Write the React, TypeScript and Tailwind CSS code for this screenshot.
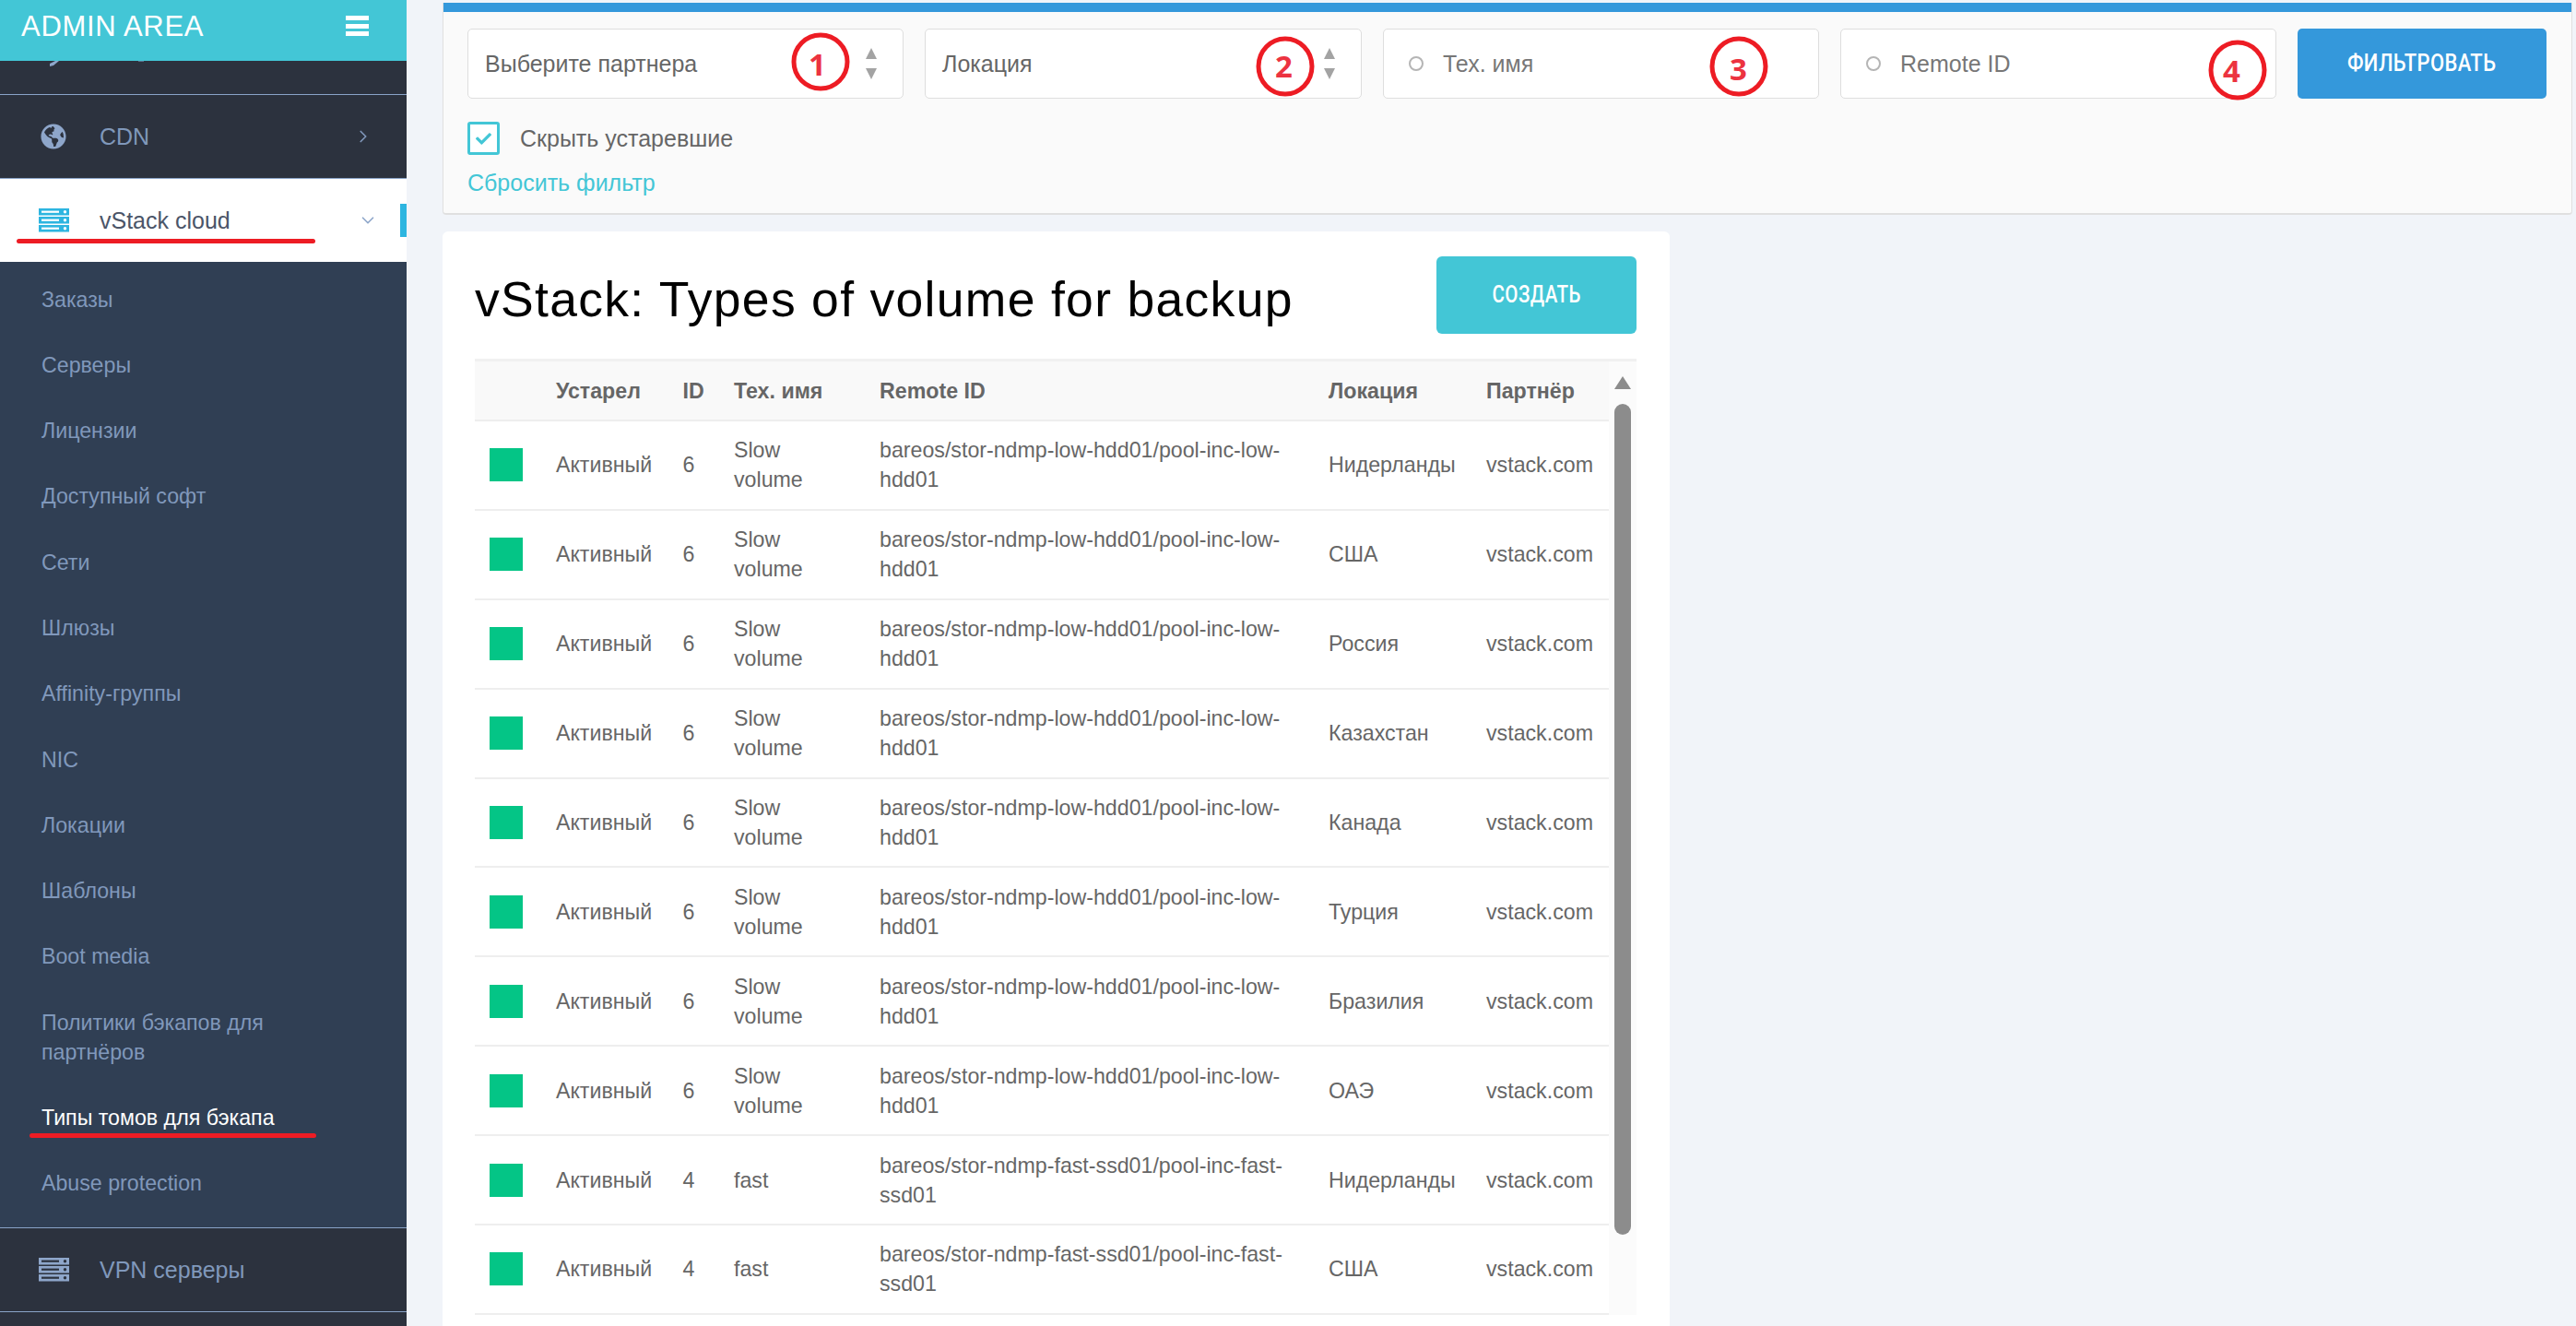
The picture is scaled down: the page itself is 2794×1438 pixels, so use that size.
import React from "react";
import { ChevronRight, ChevronDown } from "lucide-react";
import { FaGlobeAmericas, FaCheck } from "react-icons/fa";

function ServerIcon({ color, inner }: { color: string; inner: string }) {
  return (
    <svg width="33" height="26" viewBox="0 0 33 26" className="shrink-0">
      {[0, 9, 18].map((y) => (
        <g key={y}>
          <rect x="0" y={y} width="33" height="7.5" fill={color} />
          <rect x="3" y={y + 2.6} width="19" height="2.2" fill={inner} />
          <circle cx="28.5" cy={y + 3.7} r="1.7" fill={inner} />
        </g>
      ))}
    </svg>
  );
}

const sub = [
  "Заказы",
  "Серверы",
  "Лицензии",
  "Доступный софт",
  "Сети",
  "Шлюзы",
  "Affinity-группы",
  "NIC",
  "Локации",
  "Шаблоны",
  "Boot media",
  "Политики бэкапов для партнёров",
  "Типы томов для бэкапа",
  "Abuse protection",
];

const low = "bareos/stor-ndmp-low-hdd01/pool-inc-low-hdd01";
const fast = "bareos/stor-ndmp-fast-ssd01/pool-inc-fast-ssd01";
const rows = [
  ["6", "Slow volume", low, "Нидерланды"],
  ["6", "Slow volume", low, "США"],
  ["6", "Slow volume", low, "Россия"],
  ["6", "Slow volume", low, "Казахстан"],
  ["6", "Slow volume", low, "Канада"],
  ["6", "Slow volume", low, "Турция"],
  ["6", "Slow volume", low, "Бразилия"],
  ["6", "Slow volume", low, "ОАЭ"],
  ["4", "fast", fast, "Нидерланды"],
  ["4", "fast", fast, "США"],
];

function SelectBox({ label, className }: { label: string; className: string }) {
  return (
    <div className={`flex h-[76px] items-center justify-between rounded-[5px] border border-[#dedede] bg-white pl-[18px] pr-[28px] ${className}`}>
      <span className="-mt-[1px]">{label}</span>
      <span className="flex flex-col gap-[10px]">
        <span className="h-0 w-0 border-x-[6px] border-b-[12px] border-x-transparent border-b-[#a3a3a3]" />
        <span className="h-0 w-0 border-x-[6px] border-t-[12px] border-x-transparent border-t-[#a3a3a3]" />
      </span>
    </div>
  );
}

function SearchBox({ label }: { label: string }) {
  return (
    <div className="flex h-[76px] w-[473px] items-center rounded-[5px] border border-[#dedede] bg-white pl-[27px] text-[#777]">
      <span className="mr-[21px] h-[16px] w-[16px] rounded-full border-[2.5px] border-[#b5b5b5]" />
      <span className="-mt-[1px]">{label}</span>
    </div>
  );
}

function Mark({ pos, digit, digitPos, ry }: { pos: string; digit: string; digitPos: string; ry: number }) {
  return (
    <>
      <svg width="66" height="68" viewBox="0 0 66 68" className={`absolute ${pos}`}>
        <ellipse cx="33" cy="34" rx="29" ry={ry} fill="none" stroke="#ed1c24" strokeWidth="5" />
      </svg>
      <span className={`absolute text-[33px] font-bold leading-none text-[#ec3340] [font-family:'Open_Sans',sans-serif] ${digitPos}`}>{digit}</span>
    </>
  );
}

export default function App() {
  return (
    <div className="relative flex h-[1438px] w-[2794px] overflow-hidden bg-[#f1f4f9] text-[23.2px] leading-[32px] text-[#666] [font-family:'Liberation_Sans',sans-serif]">
      <aside className="flex h-full w-[441px] shrink-0 flex-col bg-[#2c323e]">
        <div className="flex h-[66px] shrink-0 items-start justify-between bg-[#43c6d6] pl-[23px] pr-[41px] pt-[11px] text-white">
          <span className="text-[31px] leading-[36px] tracking-[0.7px]">ADMIN AREA</span>
          <span className="mt-[6px] flex w-[25px] flex-col gap-[3.5px]">
            <span className="h-[5px] bg-white" />
            <span className="h-[5px] bg-white" />
            <span className="h-[5px] bg-white" />
          </span>
        </div>
        <div className="h-[37px] shrink-0 border-b border-[#8aa4c8]">
          <svg width="160" height="7" viewBox="0 0 160 7" className="block">
            <path d="M54 6 L54 3 L60 0 L64 0 L58 5 Z" fill="#8ea6ca" />
            <rect x="150" y="0" width="6" height="1" fill="#5a6f8a" />
          </svg>
        </div>
        <div className="flex h-[91px] shrink-0 items-center border-b border-[#8aa4c8] pl-[44px] pr-[36px] text-[25px] text-[#8098bb]">
          <FaGlobeAmericas className="h-[28px] w-[28px] text-[#8ea6ca]" />
          <span className="ml-[36px] flex-1">CDN</span>
          <ChevronRight className="h-[22px] w-[22px]" strokeWidth={1.8} />
        </div>
        <div className="relative flex h-[90px] shrink-0 items-center bg-white pl-[42px] pr-[31px] text-[25px] text-[#4b5568]">
          <ServerIcon color="#2db5e0" inner="#ffffff" />
          <span className="ml-[33px] flex-1">vStack cloud</span>
          <ChevronDown className="h-[22px] w-[22px] text-[#8ea6ca]" strokeWidth={1.8} />
          <span className="absolute right-0 top-[27px] h-[36px] w-[7px] bg-[#2db5e0]" />
        </div>
        <ul className="h-[1047px] shrink-0 bg-[#303f54] pl-[45px] pr-[100px] pt-[5px] text-[#8098bb]">
          {sub.map((s) => (
            <li key={s} className={`py-[19.65px] ${s.startsWith("Типы") ? "text-white" : ""}`}>
              {s}
            </li>
          ))}
        </ul>
        <div className="flex h-[92px] shrink-0 items-center border-y border-[#8aa4c8] pl-[42px] text-[25px] text-[#8098bb]">
          <ServerIcon color="#8ea6ca" inner="#2c323e" />
          <span className="ml-[33px]">VPN серверы</span>
        </div>
      </aside>

      <main className="min-w-0 flex-1 pl-[39px] pr-[4px] pt-[3px]">
        <section className="h-[230px] rounded-b-[4px] border-x border-b-2 border-[#e0e0e0] bg-[#fafafa] text-[25px]">
          <div className="h-[10px] bg-[#3498db]" />
          <div className="flex gap-[23px] pl-[26px] pr-[27px] pt-[18px]">
            <SelectBox label="Выберите партнера" className="w-[473px]" />
            <SelectBox label="Локация" className="w-[474px]" />
            <SearchBox label="Тех. имя" />
            <SearchBox label="Remote ID" />
            <button className="h-[76px] w-[270px] rounded-[5px] bg-[#3498db] font-medium tracking-[0.4px] text-white [font-family:Roboto,sans-serif]">
              <span className="inline-block origin-center scale-x-[0.88] text-[25px]">ФИЛЬТРОВАТЬ</span>
            </button>
          </div>
          <div className="flex items-center pl-[26px] pt-[25px]">
            <span className="flex h-[36px] w-[35px] items-center justify-center rounded-[3px] border-[3.5px] border-[#43c6d6] bg-white">
              <FaCheck className="h-[17px] w-[17px] text-[#43c6d6]" />
            </span>
            <span className="ml-[22px]">Скрыть устаревшие</span>
          </div>
          <div className="pl-[26px] pt-[14px] text-[#43c6d6]">Сбросить фильтр</div>
        </section>

        <section className="mt-[18px] h-[1300px] w-[1331px] overflow-hidden rounded-t-[6px] bg-white pl-[35px] pr-[36px] pt-[27px]">
          <div className="flex h-[111px] items-start justify-between">
            <h1 className="mt-[16px] text-[53.5px] font-normal leading-[62px] tracking-[1.3px] text-black">
              vStack: Types of volume for backup
            </h1>
            <button className="h-[84px] w-[217px] rounded-[6px] bg-[#43c6d6] font-medium text-white [font-family:Roboto,sans-serif]">
              <span className="inline-block scale-x-[0.82] text-[25px] tracking-[0.5px]">СОЗДАТЬ</span>
            </button>
          </div>
          <div className="flex border-t-[3px] border-[#f1f1f1]">
            <table className="w-[1230px] table-fixed border-separate border-spacing-0 text-left">
              <colgroup>
                <col className="w-[72px]" />
                <col className="w-[137.5px]" />
                <col className="w-[55.5px]" />
                <col className="w-[158px]" />
                <col className="w-[487px]" />
                <col className="w-[171px]" />
                <col className="w-[149px]" />
              </colgroup>
              <thead>
                <tr className="bg-[#f9f9f9] font-bold">
                  <th className="h-[65px] border-b-2 border-[#eee]" />
                  {["Устарел", "ID", "Тех. имя", "Remote ID", "Локация", "Партнёр"].map((h) => (
                    <th key={h} className="h-[65px] border-b-2 border-[#eee] px-[16px]">{h}</th>
                  ))}
                </tr>
              </thead>
              <tbody>
                {rows.map((r, i) => (
                  <tr key={i}>
                    <td className="h-[96.9px] border-b-2 border-[#eee] pl-[16px]">
                      <div className="h-[36px] w-[36px] bg-[#04c586]" />
                    </td>
                    <td className="border-b-2 border-[#eee] px-[16px]">Активный</td>
                    <td className="border-b-2 border-[#eee] px-[16px]">{r[0]}</td>
                    <td className="border-b-2 border-[#eee] px-[16px]">{r[1]}</td>
                    <td className="border-b-2 border-[#eee] px-[16px]">{r[2]}</td>
                    <td className="border-b-2 border-[#eee] px-[16px]">{r[3]}</td>
                    <td className="border-b-2 border-[#eee] px-[16px]">vstack.com</td>
                  </tr>
                ))}
              </tbody>
            </table>
            <div className="flex w-[30px] shrink-0 flex-col items-center bg-[#fbfbfb] pt-[16px]">
              <span className="h-0 w-0 border-x-[9px] border-b-[14px] border-x-transparent border-b-[#8c8c8c]" />
              <span className="mt-[16px] h-[901px] w-[18px] rounded-[9px] bg-[#8c8c8c]" />
            </div>
          </div>
        </section>
      </main>

      <Mark pos="left-[857px] top-[33px]" ry={29} digit="1" digitPos="left-[877px] top-[53px]" />
      <Mark pos="left-[1361px] top-[38px]" ry={30} digit="2" digitPos="left-[1383px] top-[55px]" />
      <Mark pos="left-[1853px] top-[38px]" ry={30} digit="3" digitPos="left-[1876px] top-[58px]" />
      <Mark pos="left-[2394px] top-[42px]" ry={30} digit="4" digitPos="left-[2411px] top-[60px]" />
      <span className="absolute left-[18px] top-[259px] h-[5px] w-[324px] rounded-full bg-[#ed1c24]" />
      <span className="absolute left-[32px] top-[1229px] h-[5px] w-[311px] rounded-full bg-[#ed1c24]" />
    </div>
  );
}
